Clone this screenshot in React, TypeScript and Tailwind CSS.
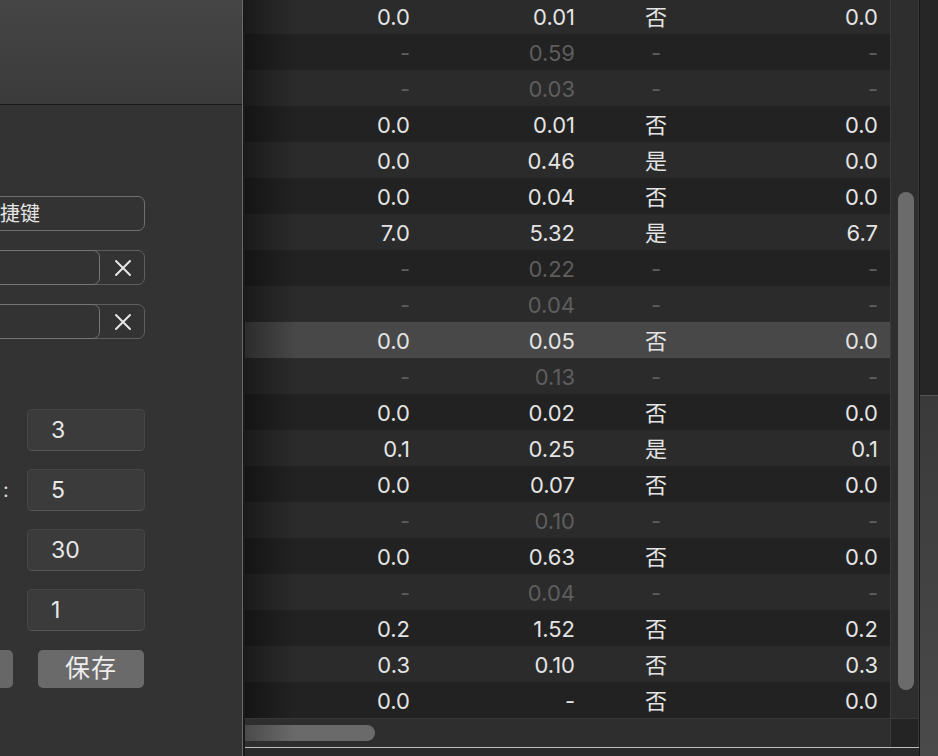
import React from "react";

const rows: string[][] = [
  ["0.0", "0.01", "否", "0.0"],
  ["-", "0.59", "-", "-"],
  ["-", "0.03", "-", "-"],
  ["0.0", "0.01", "否", "0.0"],
  ["0.0", "0.46", "是", "0.0"],
  ["0.0", "0.04", "否", "0.0"],
  ["7.0", "5.32", "是", "6.7"],
  ["-", "0.22", "-", "-"],
  ["-", "0.04", "-", "-"],
  ["0.0", "0.05", "否", "0.0"],
  ["-", "0.13", "-", "-"],
  ["0.0", "0.02", "否", "0.0"],
  ["0.1", "0.25", "是", "0.1"],
  ["0.0", "0.07", "否", "0.0"],
  ["-", "0.10", "-", "-"],
  ["0.0", "0.63", "否", "0.0"],
  ["-", "0.04", "-", "-"],
  ["0.2", "1.52", "否", "0.2"],
  ["0.3", "0.10", "否", "0.3"],
  ["0.0", "-", "否", "0.0"]
];

const SELECTED = 9;
const cjk = "font-['Inter','Noto_Sans_CJK_SC',sans-serif]";

function ClearIcon() {
  return (
    <svg width="18" height="18" viewBox="0 0 18 18" className="text-[#e6e6e6]">
      <path d="M2 2 L16 16 M16 2 L2 16" stroke="currentColor" strokeWidth="2" strokeLinecap="round" />
    </svg>
  );
}

function ClearRow() {
  return (
    <div className="flex h-[35px]">
      <div className="relative z-10 -ml-[60px] h-full w-[160px] rounded-[7px] border border-[#767676] bg-[#333333]" />
      <div className="-ml-[6px] flex h-full w-[51px] items-center justify-center rounded-r-[7px] border border-[#5f5f5f] pl-[6px]">
        <ClearIcon />
      </div>
    </div>
  );
}

function NumberField({ value, label }: { value: string; label?: string }) {
  return (
    <div className="flex h-[42px] items-center">
      <div className="w-[27px] pl-[3px] text-[20px] text-[#dcdcdc]">{label}</div>
      <div className="flex h-full w-[118px] items-center rounded-[5px] border border-[#464646] border-b-[#555555] bg-[#3b3b3b] pl-[23px] text-[23px] text-[#e8e8e8]">
        {value}
      </div>
    </div>
  );
}

function SidePanel() {
  return (
    <div className={`flex w-[243px] shrink-0 flex-col overflow-hidden border-r border-[#6a6a6a] bg-[#333333] ${cjk}`}>
      <div className="h-[105px] shrink-0 border-b border-[#1a1a1a] bg-[linear-gradient(to_bottom,#454545,#3b3b3b)]" />
      <div className="mt-[91px] flex flex-col">
        <div className="-ml-[60px] flex h-[35px] w-[205px] items-center rounded-[7px] border border-[#6f6f6f] pl-[39px] text-[20px] text-[#e6e6e6]">
          快捷键
        </div>
        <div className="mt-[19px]">
          <ClearRow />
        </div>
        <div className="mt-[19px]">
          <ClearRow />
        </div>
        <div className="mt-[70px] flex flex-col gap-[18px]">
          <NumberField value="3" />
          <NumberField value="5" label=":" />
          <NumberField value="30" />
          <NumberField value="1" />
        </div>
        <div className="mt-[19px] flex h-[38px] items-center">
          <div className="-ml-[60px] h-full w-[73px] rounded-[5px] bg-[#676767]" />
          <div className="ml-[25px] flex h-full w-[106px] items-center justify-center rounded-[5px] bg-[#6a6a6a] text-[25px] tracking-[1px] text-[#ededed]">
            保存
          </div>
        </div>
      </div>
    </div>
  );
}

function TableRow({ cells, index }: { cells: string[]; index: number }) {
  const dim = cells[0] === "-";
  const bg =
    index === SELECTED ? "bg-[#484848]" : index % 2 === 0 ? "bg-[#2b2b2b]" : "bg-[#222222]";
  const tone = dim ? "text-[#5e5e5e]" : "text-[#e4e4e4]";
  return (
    <div
      className={`grid h-[36px] shrink-0 grid-cols-[165px_166px_160px_142px] items-center pr-[12px] pt-[1px] text-[22px] leading-none ${bg} bg-[linear-gradient(to_right,rgba(0,0,0,0.4),rgba(0,0,0,0)_50px)] ${tone}`}
    >
      <div className="text-right">{cells[0]}</div>
      <div className="pr-[1px] text-right">{cells[1]}</div>
      <div className="text-center">{cells[2]}</div>
      <div className="text-right">{cells[3]}</div>
    </div>
  );
}

export default function App() {
  return (
    <div className={`flex h-[756px] w-[938px] overflow-hidden bg-[#2a2a2a] ${cjk}`}>
      <SidePanel />
      <div className="w-[2px] shrink-0 bg-[#1a1a1a]" />
      <div className="flex w-[674px] shrink-0 flex-col">
        <div className="flex h-[718px] shrink-0">
          <div className="-mt-[2px] flex w-[645px] flex-col">
            {rows.map((r, i) => (
              <TableRow key={i} cells={r} index={i} />
            ))}
          </div>
          <div className="flex w-[29px] flex-col border-x border-[#3a3a3a] bg-[#2e2e2e] pt-[192px] pl-[7px]">
            <div className="h-[498px] w-[16px] rounded-full bg-[#6b6b6b]" />
          </div>
        </div>
        <div className="flex h-[29px] shrink-0 border-t border-[#383838]">
          <div className="flex w-[645px] items-center bg-[#2e2e2e]">
            <div className="h-[16px] w-[130px] rounded-r-full bg-[#6a6a6a] bg-[linear-gradient(to_right,rgba(0,0,0,0.3),rgba(0,0,0,0)_50px)]" />
          </div>
          <div className="w-[29px] border-x border-[#3a3a3a] bg-[#242424]" />
        </div>
        <div className="h-px shrink-0 bg-[#bdbdbd]" />
        <div className="flex-1 bg-[#2a2a2a]" />
      </div>
      <div className="flex w-[19px] shrink-0 flex-col border-l border-[#151515]">
        <div className="h-[395px] bg-[#262626]" />
        <div className="flex-1 border-t border-[#555555] bg-[linear-gradient(to_bottom,#3a3a3a,#4a4a4a)]" />
      </div>
    </div>
  );
}
